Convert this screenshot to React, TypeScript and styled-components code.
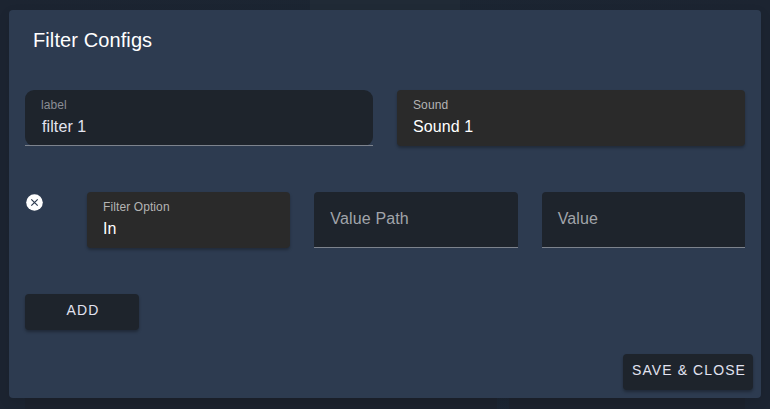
import React from "react";
import styled, { createGlobalStyle } from "styled-components";

const GlobalStyle = createGlobalStyle`
  * { box-sizing: border-box; }
  body { margin: 0; overflow: hidden; background: #1c2531; font-family: "Liberation Sans", Arial, sans-serif; }
`;

const Page = styled.div`
  height: 409px;
  padding: 10px 9px 11px;
  background:
    linear-gradient(#202a36, #202a36) 310px 0 / 150px 10px no-repeat,
    linear-gradient(#1c222d, #1c222d) 25px 398px / 472px 11px no-repeat,
    linear-gradient(#1c222d, #1c222d) 509px 398px / 236px 11px no-repeat,
    linear-gradient(90deg, #1c2431 0, #1b2532 50%, #1c2431 100%);
`;

const Dialog = styled.section`
  display: flex;
  flex-direction: column;
  width: 752px;
  height: 388px;
  border-radius: 4px;
  background: #2d3b50;
  box-shadow: 0 4px 12px rgba(0, 0, 0, 0.1);
`;

const Title = styled.h1`
  margin: 0;
  padding: 14px 24px 0;
  height: 80px;
  font-size: 20px;
  line-height: 32px;
  font-weight: 400;
  letter-spacing: 0.1px;
  color: #fff;
`;

const ConfigRow = styled.div`
  display: grid;
  grid-template-columns: 348px 348px;
  gap: 24px;
  height: 102px;
  padding: 0 16px;
  align-items: start;
`;

const FilterRow = styled.div`
  display: grid;
  grid-template-columns: 38px repeat(3, 1fr);
  column-gap: 24px;
  height: 102px;
  padding: 0 16px;
  align-items: start;
`;

const Input = styled.div<{ $radius?: number }>`
  height: 56px;
  padding: 7px 16px 0;
  position: relative;
  background: #1e242c;
  border-radius: ${(p) => (p.$radius ? `${p.$radius}px` : "4px 4px 0 0")};
  color: #e3e4f0;

  &::after {
    content: "";
    position: absolute;
    inset: auto 0 0;
    height: 1px;
    background: #7d838d;
  }
`;

const Select = styled.div`
  height: 56px;
  padding: 7px 16px 0;
  border-radius: 4px;
  background: #2a2a2a;
  color: #fff;
  box-shadow: 0 2px 3px rgba(0, 0, 0, 0.28);
`;

const Label = styled.div`
  height: 16px;
  font-size: 12px;
  line-height: 16px;
  letter-spacing: 0.1px;
  color: #b4b4b4;

  ${Input} & { color: #8b8d95; }
`;

const Value = styled.div<{ $indent?: number }>`
  margin-top: 2px;
  padding-left: ${(p) => p.$indent ?? 0}px;
  font-size: 16px;
  line-height: 24px;
  letter-spacing: 0.1px;
`;

const Placeholder = styled.div`
  padding-top: 8px;
  font-size: 16px;
  line-height: 24px;
  letter-spacing: 0.15px;
  color: #a1a4aa;
`;

const RemoveButton = styled.button`
  display: block;
  width: 20px;
  height: 20px;
  padding: 0;
  border: 0;
  background: none;

  svg { display: block; }
`;

const Button = styled.button<{ $width: number }>`
  width: ${(p) => p.$width}px;
  height: 36px;
  padding: 0 0 4px 2px;
  border: 0;
  border-radius: 4px;
  background: #1e242c;
  color: #e1e2f0;
  font-family: inherit;
  font-size: 14px;
  line-height: 32px;
  letter-spacing: 1.1px;
  white-space: nowrap;
  box-shadow: 0 2px 3px rgba(0, 0, 0, 0.3);
`;

const AddRow = styled.div`
  height: 60px;
  padding-left: 16px;
`;

const Actions = styled.footer`
  display: flex;
  justify-content: flex-end;
  padding: 0 8px;
`;

export default function App() {
  return (
    <Page>
      <GlobalStyle />
      <Dialog>
        <Title>Filter Configs</Title>
        <ConfigRow>
          <Input $radius={9}>
            <Label>label</Label>
            <Value $indent={1}>filter 1</Value>
          </Input>
          <Select>
            <Label>Sound</Label>
            <Value>Sound 1</Value>
          </Select>
        </ConfigRow>
        <FilterRow>
          <RemoveButton aria-label="Remove filter">
            <svg width="20" height="20" viewBox="0 0 20 20">
              <circle cx="9.5" cy="10.5" r="8.3" fill="#fff" />
              <path d="M6.3 7.3l6.4 6.4M12.7 7.3l-6.4 6.4" stroke="#2d3b50" strokeWidth="1.2" />
            </svg>
          </RemoveButton>
          <Select>
            <Label>Filter Option</Label>
            <Value>In</Value>
          </Select>
          <Input>
            <Placeholder>Value Path</Placeholder>
          </Input>
          <Input>
            <Placeholder>Value</Placeholder>
          </Input>
        </FilterRow>
        <AddRow>
          <Button $width={114}>ADD</Button>
        </AddRow>
        <Actions>
          <Button $width={130}>SAVE &amp; CLOSE</Button>
        </Actions>
      </Dialog>
    </Page>
  );
}
